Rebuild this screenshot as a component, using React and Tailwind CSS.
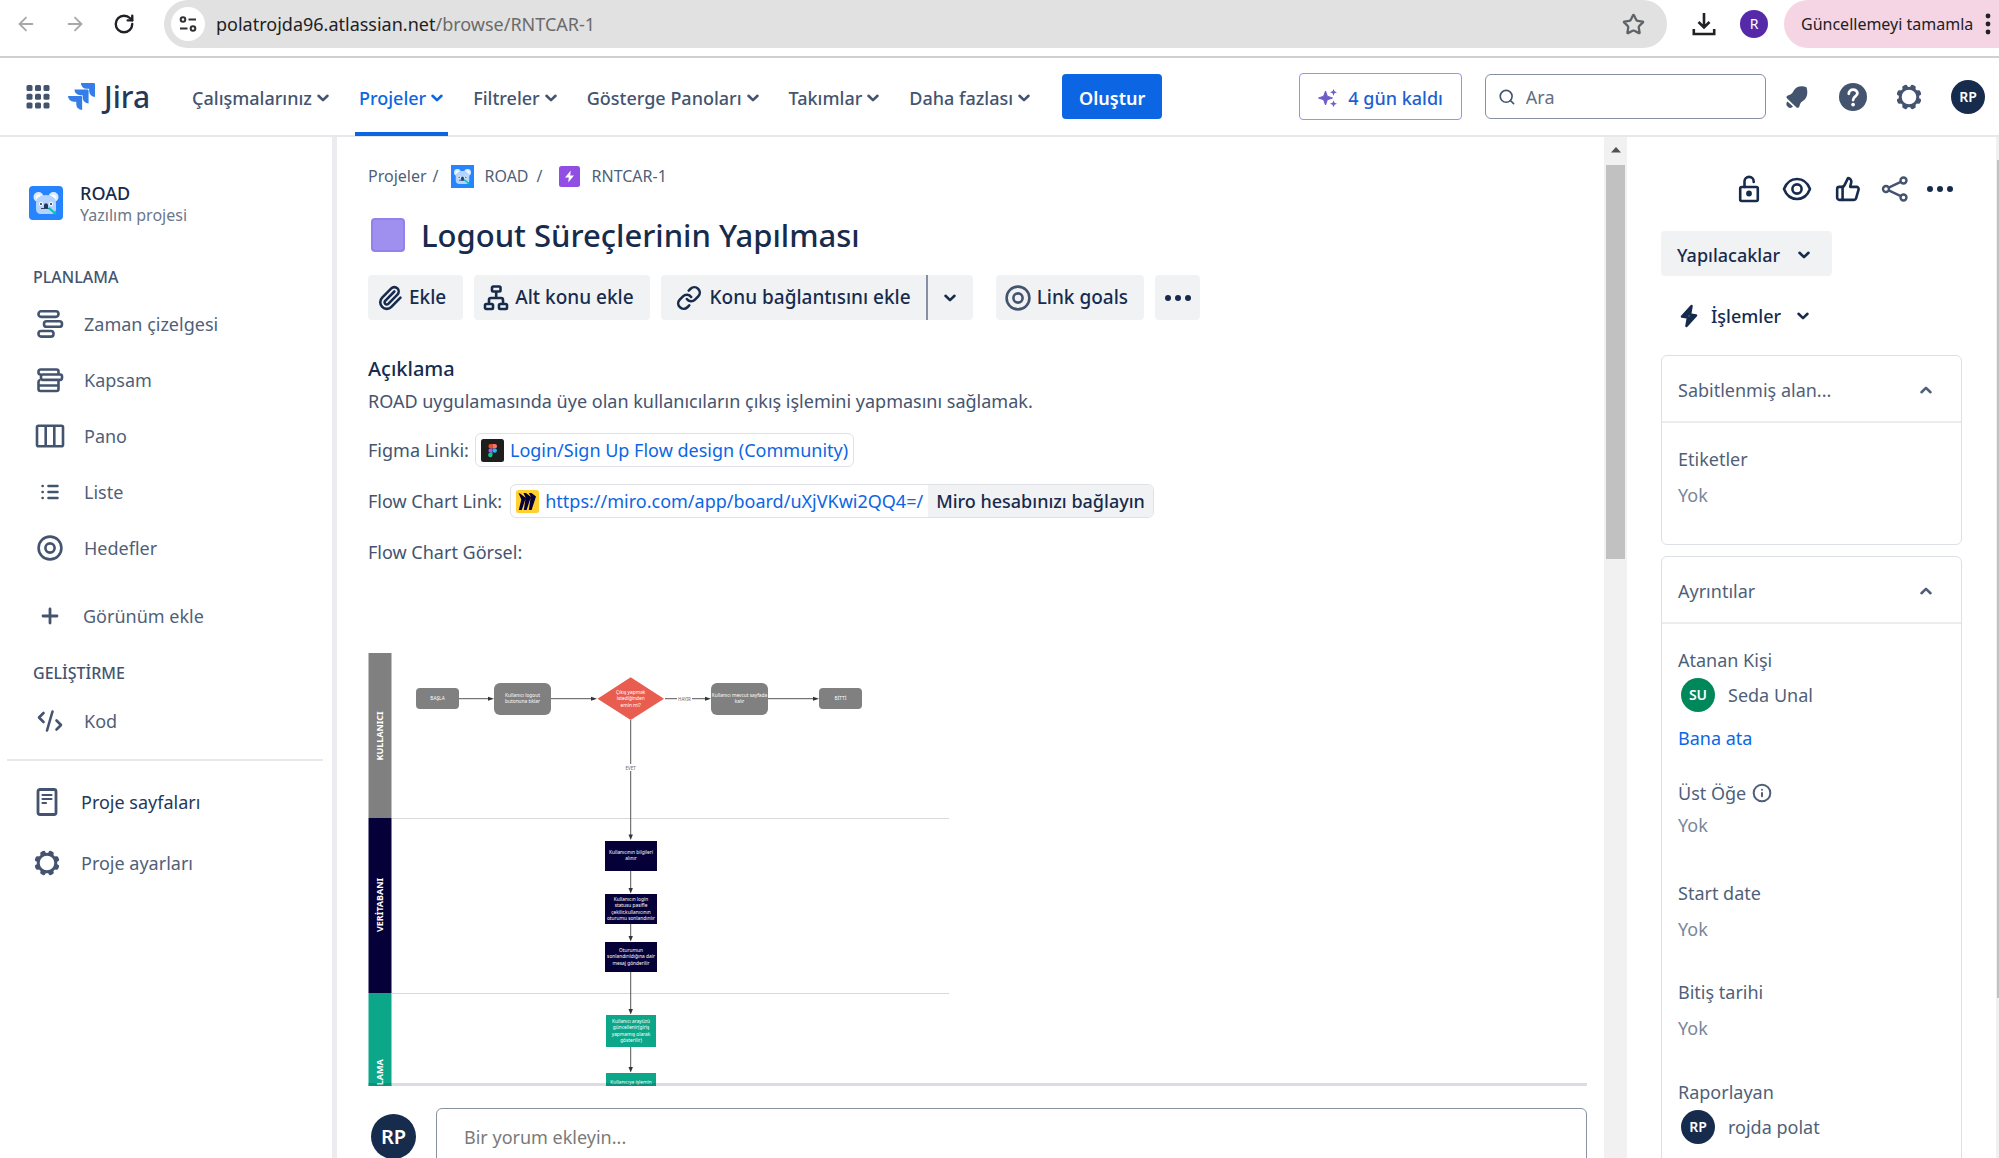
import React from "react";
import { ArrowLeft, ArrowRight, RotateCw, Star, Paperclip, Link, Plus, Info, Search, ThumbsUp } from "lucide-react";

const Chevron = ({ up, className = "" }) => (
  <svg viewBox="0 0 14 10" className={`h-[10px] w-[14px] shrink-0 fill-none stroke-current ${className}`}>
    <path d={up ? "M2.5 7.2 7 2.9l4.500 4.300" : "M2.500 2.800 7 7.100l4.500-4.300"} strokeWidth="2.600" strokeLinecap="round" strokeLinejoin="round" />
  </svg>
);

const Koala = ({ className }) => (
  <svg viewBox="0 0 34 34" className={className}>
    <rect width="34" height="34" fill="#2684ff" />
    <circle cx="9.500" cy="11" r="5" fill="#deebff" />
    <circle cx="24.500" cy="11" r="5" fill="#deebff" />
    <circle cx="9.700" cy="11.200" r="2.600" fill="#fff" />
    <circle cx="24.300" cy="11.200" r="2.600" fill="#fff" />
    <path d="M7 17c0-5 4-8 10-8s10 3 10 8v6c0 3-2 5-5 5H12c-3 0-5-2-5-5z" fill="#b3d4ff" />
    <circle cx="12" cy="18" r="2" fill="#fff" />
    <circle cx="22" cy="18" r="2" fill="#fff" />
    <circle cx="12" cy="18" r="1.100" fill="#253858" />
    <circle cx="22" cy="18" r="1.100" fill="#253858" />
    <path d="M15 19.500c0-3 4-3 4 0V23h-4z" fill="#253858" />
    <path d="M12 22.500h9" stroke="#344563" strokeWidth="1.200" />
    <path d="m20.500 22.500 6 5" stroke="#00c7b1" strokeWidth="2.200" strokeLinecap="round" />
  </svg>
);

const Gear = ({ className }) => (
  <svg viewBox="0 0 26 26" className={className}>
    <g fill="currentColor">
      {[22.5, 67.5, 112.5, 157.5, 202.5, 247.5, 292.5, 337.5].map((a) => (
        <rect key={a} x="10.200" y="0.400" width="5.600" height="6" rx="2" transform={`rotate(${a} 13 13)`} />
      ))}
    </g>
    <circle cx="13" cy="13" r="8.800" fill="#fff" stroke="currentColor" strokeWidth="3" />
  </svg>
);

const Target = ({ className }) => (
  <svg viewBox="0 0 26 26" className={className} fill="none" stroke="currentColor" strokeWidth="2.600">
    <circle cx="13" cy="13" r="11.400" />
    <circle cx="13" cy="13" r="4.600" />
  </svg>
);

const Dots = ({ className }) => (
  <svg viewBox="0 0 28 8" className={className} fill="currentColor">
    <circle cx="4" cy="4" r="3" />
    <circle cx="14" cy="4" r="3" />
    <circle cx="24" cy="4" r="3" />
  </svg>
);

const Timeline = () => (
  <svg viewBox="0 0 28 30" className="h-[30px] w-7" fill="none" stroke="currentColor" strokeWidth="2.600">
    <rect x="2.500" y="2.300" width="20" height="5.600" rx="2.600" />
    <rect x="8" y="12.200" width="18" height="5.600" rx="2.600" />
    <rect x="2.500" y="22" width="15" height="5.600" rx="2.600" />
  </svg>
);

const Backlog = () => (
  <svg viewBox="0 0 28 28" className="h-7 w-7" fill="none" stroke="currentColor" strokeWidth="2.600">
    <path d="M5 8.500H4.500a2 2 0 0 1-2-2v-1a2 2 0 0 1 2-2h16a2 2 0 0 1 2 2V8" />
    <rect x="5" y="8.500" width="21" height="5.400" rx="1.800" />
    <path d="M22.500 14v9a2 2 0 0 1-2 2h-16a2 2 0 0 1-2-2v-7a2 2 0 0 1 2-2M2.500 19.500h20" />
  </svg>
);

const Board = () => (
  <svg viewBox="0 0 30 24" className="h-6 w-[30px]" fill="none" stroke="currentColor" strokeWidth="2.600">
    <rect x="2" y="1.800" width="26" height="20.400" rx="1.500" />
    <path d="M10.700 2v20M19.300 2v20" />
  </svg>
);

const ListIcon = () => (
  <svg viewBox="0 0 18 16" className="h-4 w-[18px]" fill="none" stroke="currentColor" strokeWidth="2.600" strokeLinecap="round">
    <path d="M1.600 2h.1M1.600 8h.1M1.600 14h.1M7.500 2h9M7.500 8h9M7.500 14h9" />
  </svg>
);

const Code = () => (
  <svg viewBox="0 0 26 24" className="h-6 w-[26px]" fill="none" stroke="currentColor" strokeWidth="2.600" strokeLinecap="round" strokeLinejoin="round">
    <path d="M6.500 4 2 8.500 6.500 13M19.500 11.500 24 16l-4.500 4.500M15.500 2.500l-5.500 19" />
  </svg>
);

const PageIcon = () => (
  <svg viewBox="0 0 22 30" className="h-[30px] w-[22px]" fill="none" stroke="currentColor" strokeWidth="2.800" strokeLinecap="round">
    <rect x="2" y="2.500" width="18" height="25" rx="2" />
    <path d="M6.500 8h9M6.500 12h9M6.500 16h3.500" strokeWidth="2.200" />
  </svg>
);

const Subtask = () => (
  <svg viewBox="0 0 26 28" className="h-7 w-[26px]" fill="none" stroke="currentColor" strokeWidth="2.600">
    <rect x="9" y="2.500" width="8.500" height="5" rx="1.200" />
    <rect x="2" y="20" width="8" height="5" rx="1.200" />
    <rect x="16" y="20" width="8" height="5" rx="1.200" />
    <path d="M13.200 8v6M6 20v-4a2 2 0 0 1 2-2h10a2 2 0 0 1 2 2v4" />
  </svg>
);

const Epic = () => (
  <svg viewBox="0 0 21 21" className="h-[21px] w-[21px]">
    <rect width="21" height="21" rx="2.500" fill="#904ee2" />
    <path d="M11.800 4.500 6 11.500h3.800L9.200 16.500l5.800-7h-3.800z" fill="#fff" />
  </svg>
);

const Unlock = () => (
  <svg viewBox="0 0 22 28" className="h-7 w-[22px]" fill="none" stroke="currentColor" strokeWidth="2.600" strokeLinecap="round">
    <rect x="2.200" y="12" width="17.600" height="14" rx="1.500" />
    <path d="M6.500 12V6.500a4.600 4.600 0 0 1 9.200 0V7" />
    <circle cx="11" cy="18.500" r="1.600" fill="currentColor" />
  </svg>
);

const Eye = () => (
  <svg viewBox="0 0 30 24" className="h-6 w-[30px]" fill="none" stroke="currentColor" strokeWidth="2.600">
    <path d="M2 12C4.500 5.500 9 2 15 2s10.500 3.500 13 10c-2.500 6.500-7 10-13 10S4.500 18.500 2 12z" strokeLinejoin="round" />
    <circle cx="15" cy="12" r="4.600" />
  </svg>
);

const Share = () => (
  <svg viewBox="0 0 28 28" className="h-7 w-7 text-[#44546f]" fill="none" stroke="currentColor" strokeWidth="2.400">
    <circle cx="5" cy="14" r="3" />
    <circle cx="22.500" cy="5.500" r="3" />
    <circle cx="22.500" cy="22.500" r="3" />
    <path d="M7.700 12.700 19.800 6.900M7.700 15.300l12.100 5.800" />
  </svg>
);

const Sparkle = () => (
  <svg viewBox="0 0 20 20" className="h-5 w-5" fill="#6e5dc6">
    <path d="M7.500 3 9.300 8.200 14.500 10 9.300 11.800 7.500 17 5.700 11.800.5 10l5.200-1.800z" stroke="#6e5dc6" strokeLinejoin="round" />
    <path d="m15.500 1 1 2.300 2.500 1-2.500 1-1 2.400-1-2.400-2.500-1 2.500-1zM15.500 12.500l1 2.300 2.500 1-2.500 1-1 2.400-1-2.400-2.500-1 2.500-1z" />
  </svg>
);

const Bell = () => (
  <svg viewBox="0 0 26 26" className="h-[26px] w-[26px]" fill="currentColor">
    <path d="M22.500 3.200c-5.500-2-10.500-.5-12.700 3.400C8.500 9 7.500 10.600 4.500 11.200c-2 .4-2.600 2-1.400 3.200l9.200 8.900c1.200 1.100 2.800.5 3.200-1.400.6-3 2-3.800 4-5.300 3.600-2.700 4.800-7.500 3-13.400z" />
    <path d="M3.500 17.500a3.700 3.700 0 0 0 5.500 5z" />
  </svg>
);

const Bolt = () => (
  <svg viewBox="0 0 18 24" className="h-6 w-[18px]">
    <path d="M11.500 2 2 12.500l6 1L6.500 22 16 11.500l-6-1z" fill="none" stroke="currentColor" strokeWidth="2.600" strokeLinejoin="round" />
    <path d="M11.500 2 2 12.500l7 .5z M16 11.500 6.500 22 9 11z" fill="currentColor" />
  </svg>
);

const FigmaLogo = () => (
  <svg viewBox="0 0 23 23" className="h-[23px] w-[23px]">
    <rect width="23" height="23" rx="2.500" fill="#1e1e1e" />
    <path d="M11.500 5H9.600a2.200 2.200 0 0 0 0 4.400h1.900z" fill="#f24e1e" />
    <path d="M11.500 5h2.300a2.200 2.200 0 0 1 0 4.400h-2.300z" fill="#ff7262" />
    <path d="M11.500 9.400H9.600a2.200 2.200 0 0 0 0 4.400h1.900z" fill="#a259ff" />
    <circle cx="13.800" cy="11.600" r="2.200" fill="#1abcfe" />
    <path d="M11.500 13.800H9.600a2.200 2.200 0 1 0 1.900 2.200z" fill="#0acf83" />
  </svg>
);

const MiroLogo = () => (
  <svg viewBox="0 0 23 23" className="h-[23px] w-[23px]">
    <rect width="23" height="23" rx="2.500" fill="#ffd02f" />
    <path d="M15.500 3h-2.700l2.200 4-5-4H7.400l2.400 5L4.500 3.800 2.500 3l2.800 6.500L2.800 20h3L9.500 8.800 7.800 20h2.800l4-12.200L12.800 20h2.800L20 6.500z" fill="#050038" />
  </svg>
);

const Avatar = ({ children, className }) => (
  <span className={`flex shrink-0 items-center justify-center rounded-full font-semibold text-white ${className}`}>{children}</span>
);

function BrowserBar() {
  return (
    <div className="flex h-[58px] shrink-0 items-start border-b-2 border-[#d0d0d0] text-lg">
      <div className="flex h-12 w-[164px] items-center gap-[27px] pl-[15px]">
        <button aria-label="Geri" className="text-[#a8a8a8]"><ArrowLeft size={22} strokeWidth={2} /></button>
        <button aria-label="İleri" className="text-[#a8a8a8]"><ArrowRight size={22} strokeWidth={2} /></button>
        <button aria-label="Yenile" className="text-[#202124]"><RotateCw size={22} strokeWidth={2.600} /></button>
      </div>
      <div className="flex h-12 flex-1 items-center rounded-full bg-[#e1e1e1] pr-[22px] pl-[7px]">
        <span className="flex h-[34px] w-[34px] items-center justify-center rounded-full bg-white">
          <svg viewBox="0 0 18 16" className="h-4 w-[18px]" fill="none" stroke="#303134" strokeWidth="2">
            <circle cx="4" cy="3.500" r="2.300" />
            <path d="M9.500 3.500H17M1 12.500h7.500" />
            <circle cx="14" cy="12.500" r="2.300" />
          </svg>
        </span>
        <span className="ml-[11px] text-[#202124]">polatrojda96.atlassian.net<span className="text-[#6b6b6b]">/browse/RNTCAR-1</span></span>
        <button aria-label="Yer işareti ekle" className="ml-auto text-[#5f6368]"><Star size={23} strokeWidth={2.400} /></button>
      </div>
      <div className="flex h-12 items-center pl-[25px]">
        <button aria-label="İndirilenler">
          <svg viewBox="0 0 24 24" className="h-6 w-6" fill="none" stroke="#202124" strokeWidth="2.600">
            <path d="M12 1v14M6.500 10l5.500 5.500 5.500-5.500M1.800 17v5h20.400v-5" />
          </svg>
        </button>
        <span className="ml-6 flex h-7 w-7 items-center justify-center rounded-full bg-[#5529a8] text-sm text-white">R</span>
        <button className="ml-4 flex h-12 w-[215px] items-center justify-between rounded-l-full bg-[#f5d5e3] pr-2 pl-[17px] text-base text-[#202124]">
          Güncellemeyi tamamla
          <svg viewBox="0 0 6 22" className="h-[22px] w-[6px]" fill="#202124">
            <circle cx="3" cy="3" r="2.400" /><circle cx="3" cy="11" r="2.400" /><circle cx="3" cy="19" r="2.400" />
          </svg>
        </button>
      </div>
    </div>
  );
}

const navItems = ["Çalışmalarınız", "Projeler", "Filtreler", "Gösterge Panoları", "Takımlar", "Daha fazlası"];

function TopNav() {
  return (
    <header className="flex h-[79px] shrink-0 items-center border-b-2 border-[#e6e8ec] pr-[14px] pl-[26px] text-[#44546f]">
      <button aria-label="Uygulama değiştirici">
        <svg viewBox="0 0 24 24" className="h-6 w-6" fill="currentColor">
          {[0, 8.7, 17.4].map((y) => [0.5, 9, 17.5].map((x) => <rect key={`${x}-${y}`} x={x} y={y} width="6" height="6" rx="1.500" />))}
        </svg>
      </button>
      <a href="#jira" className="ml-[18px] flex items-center gap-[9px]">
        <svg viewBox="0 0 24 24" className="h-[27px] w-[27px]" fill="#357de8">
          <path d="M11.571 11.513H0a5.218 5.218 0 0 0 5.232 5.215h2.130v2.057A5.215 5.215 0 0 0 12.575 24V12.518a1.005 1.005 0 0 0-1.005-1.005zm5.723-5.756H5.736a5.215 5.215 0 0 0 5.215 5.214h2.129v2.058a5.218 5.218 0 0 0 5.215 5.214V6.758a1.001 1.001 0 0 0-1.001-1.001zM23.013 0H11.455a5.215 5.215 0 0 0 5.215 5.215h2.129v2.057A5.215 5.215 0 0 0 24 12.483V1.005A1.001 1.001 0 0 0 23.013 0Z" />
        </svg>
        <span className="text-3xl leading-9 font-medium text-[#253858]">Jira</span>
      </a>
      <nav className="ml-[38px] flex h-[79px] items-stretch gap-[21px] text-lg font-medium">
        {navItems.map((label) => (
          <button
            key={label}
            className={label === "Projeler" ? "flex items-center gap-1 border-b-4 border-[#0c66e4] px-1 pt-1.5 whitespace-nowrap text-[#0c66e4]" : "flex items-center gap-1 px-1 pt-0.5 whitespace-nowrap"}
          >
            {label}
            <Chevron />
          </button>
        ))}
      </nav>
      <button className="ml-[27px] h-[45px] rounded bg-[#0c66e4] px-[17px] pt-0.5 text-lg font-semibold text-white">Oluştur</button>
      <button className="ml-auto flex h-[47px] items-center gap-2.5 rounded border border-[#9f8fef] px-[18px] pt-0.5 text-lg font-medium whitespace-nowrap text-[#1d5fd0]">
        <Sparkle />
        4 gün kaldı
      </button>
      <label className="ml-[23px] flex h-[45px] w-[281px] items-center gap-2.5 rounded-md border border-[#8590a2] px-3">
        <Search size={20} strokeWidth={2.200} />
        <input type="text" aria-label="Ara" placeholder="Ara" className="w-full min-w-0 text-lg outline-none placeholder:text-[#626f86]" />
      </label>
      <div className="ml-[18px] flex items-center gap-[29px]">
        <button aria-label="Bildirimler"><Bell /></button>
        <button aria-label="Yardım">
          <svg viewBox="0 0 28 28" className="h-7 w-7">
            <circle cx="14" cy="14" r="14" fill="currentColor" />
            <path d="M9.800 10.800c0-5.500 8.600-5.400 8.600-.5 0 3.300-4.300 3-4.300 6.700" fill="none" stroke="#fff" strokeWidth="2.800" strokeLinecap="round" />
            <circle cx="14.100" cy="21.600" r="1.900" fill="#fff" />
          </svg>
        </button>
        <button aria-label="Ayarlar"><Gear className="h-[26px] w-[26px]" /></button>
        <Avatar className="h-[34px] w-[34px] bg-[#172b4d] text-sm">RP</Avatar>
      </div>
    </header>
  );
}

const NavRow = ({ icon, children, className = "h-14 gap-[17px]" }) => (
  <a href="#gezinme" className={`flex items-center ${className}`}>
    <span className="flex w-[34px] shrink-0 justify-center text-[#44546f]">{icon}</span>
    {children}
  </a>
);

function Sidebar() {
  return (
    <aside className="w-[337px] shrink-0 border-r-[5px] border-[#ebecf0] text-lg text-[#505f79]">
      <div className="flex items-center gap-[17px] pt-11 pl-[29px]">
        <Koala className="h-[34px] w-[34px] rounded-sm" />
        <div>
          <div className="leading-6 font-medium text-[#172b4d]">ROAD</div>
          <div className="text-base leading-5 text-[#6b778c]">Yazılım projesi</div>
        </div>
      </div>
      <h2 className="mt-10 pl-[33px] text-base leading-6 font-medium text-[#44546f]">PLANLAMA</h2>
      <div className="mt-[7px] pl-[33px]">
        <NavRow icon={<Timeline />}>Zaman çizelgesi</NavRow>
        <NavRow icon={<Backlog />}>Kapsam</NavRow>
        <NavRow icon={<Board />}>Pano</NavRow>
        <NavRow icon={<ListIcon />}>Liste</NavRow>
        <NavRow icon={<Target className="h-[26px] w-[26px]" />}>Hedefler</NavRow>
        <NavRow className="mt-3 h-14 gap-4" icon={<Plus size={24} strokeWidth={2.800} />}>Görünüm ekle</NavRow>
      </div>
      <h2 className="mt-[17px] pl-[33px] text-base leading-6 font-medium text-[#44546f]">GELİŞTİRME</h2>
      <div className="mt-2 pl-[33px]">
        <NavRow icon={<Code />}>Kod</NavRow>
      </div>
      <hr className="mt-2.5 mr-[9px] ml-[7px] border-t-2 border-[#e6e8ec]" />
      <div className="mt-2.5 pl-[30px]">
        <NavRow className="h-[61px] gap-[17px] text-[#253858]" icon={<PageIcon />}>Proje sayfaları</NavRow>
        <NavRow className="h-[61px] gap-[17px]" icon={<Gear className="h-[26px] w-[26px]" />}>Proje ayarları</NavRow>
      </div>
    </aside>
  );
}

const Lines = ({ x, y, lines, fill = "#fff", size = 4.8 }) => (
  <text x={x} y={y} fill={fill} fontSize={size} textAnchor="middle">
    {lines.map((line, i) => <tspan key={line} x={x} dy={i === 0 ? 0 : 6.4}>{line}</tspan>)}
  </text>
);

const lanes = [
  { y: 0, h: 165, fill: "#808080", label: "KULLANICI", ly: 83 },
  { y: 165, h: 175, fill: "#050038", label: "VERİTABANI", ly: 252 },
  { y: 340, h: 175, fill: "#0ca789", label: "UYGULAMA", ly: 432 },
];

const boxes = [
  { x: 48, y: 35, w: 43, h: 21, r: 4, fill: "#808080", lines: ["BAŞLA"], ty: 47 },
  { x: 126, y: 30, w: 57, h: 32, r: 6, fill: "#808080", lines: ["Kullanıcı logout", "butonuna tıklar"], ty: 44 },
  { x: 343, y: 30, w: 57, h: 32, r: 6, fill: "#808080", lines: ["Kullanıcı mevcut sayfada", "kalır"], ty: 44 },
  { x: 451, y: 35, w: 43, h: 21, r: 4, fill: "#808080", lines: ["BİTTİ"], ty: 47 },
  { x: 237, y: 188, w: 52, h: 30, r: 0, fill: "#050038", lines: ["Kullanıcının bilgileri", "alınır"], ty: 201 },
  { x: 237, y: 241, w: 52, h: 30, r: 0, fill: "#050038", lines: ["Kullanıcın login", "statusu pasifle", "çekilir,kullanıcının", "oturumu sonlandırılır"], ty: 248 },
  { x: 237, y: 289, w: 52, h: 30, r: 0, fill: "#050038", lines: ["Oturumun", "sonlandırıldığına dair", "mesaj gönderilir"], ty: 299 },
  { x: 238, y: 362, w: 50, h: 32, r: 0, fill: "#0ca789", lines: ["Kullanıcı arayüzü", "güncellenir(giriş", "yapmamış olarak", "gösterilir)"], ty: 370 },
  { x: 238, y: 420, w: 50, h: 32, r: 0, fill: "#0ca789", lines: ["Kullanıcıya işlemin"], ty: 431 },
];

function FlowChart() {
  return (
    <svg viewBox="0 0 582 515" className="h-[515px] w-[582px] max-w-none" role="img" aria-label="Logout akış şeması">
      {lanes.map((l) => (
        <g key={l.label}>
          <rect x="0.500" y={l.y} width="23" height={l.h} fill={l.fill} />
          <text transform={`translate(15.200 ${l.ly}) rotate(-90)`} textAnchor="middle" fontSize="9" fontWeight="700" fill="#fff">{l.label}</text>
        </g>
      ))}
      <path d="M24 165.500H581M24 340.500H581" stroke="#d9d9d9" strokeWidth="1.200" />
      <g stroke="#555" strokeWidth="1">
        <path d="M91 45.700H122M183 45.700H226M297 45.700H338M400 45.700H447M262.700 67V184M262.700 218V237M262.700 271V285M262.700 319V358M262.700 394V416" />
      </g>
      <g fill="#333">
        {[126, 229, 343, 451].map((x) => <path key={x} d={`M${x} 45.700l-6-2v4z`} />)}
        {[187, 240.500, 288.500, 361.500, 419.500].map((y) => <path key={y} d={`M262.700 ${y}l-2.200-5.500h4.400z`} />)}
      </g>
      <path d="M262.700 24.300 296 45.700 262.700 67 229.500 45.700z" fill="#e85d50" />
      <Lines x={262.7} y={41} lines={["Çıkış yapmak", "istediğinden", "emin mi?"]} />
      <rect x="309" y="42" width="15" height="7" fill="#fff" />
      <Lines x={316.5} y={47.5} lines={["HAYIR"]} fill="#666" size={4.5} />
      <rect x="257" y="111" width="12" height="7" fill="#fff" />
      <Lines x={262.7} y={116.5} lines={["EVET"]} fill="#666" size={4.5} />
      {boxes.map((b) => (
        <g key={`${b.x}-${b.y}`}>
          <rect x={b.x} y={b.y} width={b.w} height={b.h} rx={b.r} fill={b.fill} />
          <Lines x={b.x + b.w / 2} y={b.ty} lines={b.lines} />
        </g>
      ))}
    </svg>
  );
}

const grayButton = "flex h-[45px] items-center bg-[#f1f2f4] font-medium whitespace-nowrap text-[#172b4d]";

function Issue() {
  return (
    <main className="flex min-w-0 flex-1 flex-col pr-[17px] pl-[31px] text-lg text-[#44546f]">
      <div className="relative min-h-0 flex-1 overflow-hidden">
        <nav aria-label="İçerik haritası" className="mt-[27px] flex h-6 items-center text-base text-[#505f79]">
          <a href="#projeler">Projeler</a>
          <span className="ml-1.5">/</span>
          <Koala className="ml-3 h-[23px] w-[23px]" />
          <a href="#road" className="ml-[11px]">ROAD</a>
          <span className="ml-2">/</span>
          <span className="ml-4"><Epic /></span>
          <a href="#rntcar-1" className="ml-3">RNTCAR-1</a>
        </nav>
        <div className="mt-[23px] flex h-12 items-center gap-4 pl-[3px]">
          <span className="h-[34px] w-[34px] rounded border-2 border-[#8f7ee7]/80 bg-[#9f8fef]" />
          <h1 className="text-[31px] font-medium text-[#172b4d]">Logout Süreçlerinin Yapılması</h1>
        </div>
        <div className="mt-4 flex text-[19px]">
          <button className={`${grayButton} gap-1.5 rounded pr-[17px] pl-[9px]`}><Paperclip size={26} strokeWidth={2.400} />Ekle</button>
          <button className={`${grayButton} ml-[11px] gap-1.5 rounded pr-4 pl-[9px]`}><Subtask />Alt konu ekle</button>
          <button className={`${grayButton} ml-[11px] gap-2 rounded-l border-r-2 border-[#8590a2] pr-[15px] pl-[15px]`}><Link size={26} strokeWidth={2.400} />Konu bağlantısını ekle</button>
          <button aria-label="Bağlantı seçenekleri" className={`${grayButton} w-[45px] justify-center rounded-r`}><Chevron /></button>
          <button className={`${grayButton} ml-[23px] gap-1.5 rounded pr-4 pl-[9px]`}><Target className="h-[26px] w-[26px] text-[#44546f]" />Link goals</button>
          <button aria-label="Diğer işlemler" className={`${grayButton} ml-[11px] w-[45px] justify-center rounded`}><Dots className="h-2 w-7" /></button>
        </div>
        <h2 className="mt-[35px] text-xl leading-7 font-medium text-[#172b4d]">Açıklama</h2>
        <p className="mt-1 leading-7">ROAD uygulamasında üye olan kullanıcıların çıkış işlemini yapmasını sağlamak.</p>
        <div className="mt-[18px] flex h-[34px] items-center gap-1.5 whitespace-nowrap">
          Figma Linki:
          <a href="#figma" className="flex h-[34px] items-center gap-1.5 rounded-md border border-[#dfe1e6] px-[5px] text-[#0c66e4]"><FigmaLogo />Login/Sign Up Flow design (Community)</a>
        </div>
        <div className="mt-[17px] flex h-[34px] items-center gap-2 whitespace-nowrap">
          Flow Chart Link:
          <span className="flex h-[34px] items-stretch overflow-hidden rounded-md border border-[#dfe1e6]">
            <a href="#miro" className="flex items-center gap-1.5 px-[5px] text-[#0c66e4]"><MiroLogo />https://miro.com/app/board/uXjVKwi2QQ4=/</a>
            <button className="bg-[#f1f2f4] px-2 font-medium text-[#172b4d]">Miro hesabınızı bağlayın</button>
          </span>
        </div>
        <p className="mt-[17px] leading-[34px]">Flow Chart Görsel:</p>
        <div className="mt-[84px]"><FlowChart /></div>
        <div className="absolute inset-x-0 bottom-0 h-[3px] bg-[#091e42]/15" />
      </div>
      <div className="flex h-[72px] shrink-0 items-start overflow-hidden pt-[22px] pl-[3px]">
        <Avatar className="mt-1.5 h-[45px] w-[45px] bg-[#172b4d] text-xl">RP</Avatar>
        <input type="text" aria-label="Yorum" placeholder="Bir yorum ekleyin..." className="ml-5 h-[58px] min-w-0 flex-1 rounded-md border border-[#8993a4] px-[27px] text-lg outline-none placeholder:text-[#7a7a7a]" />
      </div>
    </main>
  );
}

const Card = ({ title, children, className }) => (
  <section className={`w-[301px] rounded-md border border-[#dcdfe4] ${className}`}>
    <button className="flex h-[67px] w-full items-center justify-between border-b-2 border-[#ebecf0] pt-0.5 pr-7 pl-4 text-[#505f79]">
      {title}
      <Chevron up />
    </button>
    <div className="px-4">{children}</div>
  </section>
);

const Field = ({ label, value, className, tight }) => (
  <div className={className}>
    <div className="flex h-7 items-center gap-1.5">{label}</div>
    <div className={tight ? "mt-1 h-7 leading-7 text-[#7a869a]" : "mt-2 h-7 leading-7 text-[#7a869a]"}>{value}</div>
  </div>
);

const Person = ({ initials, color, name }) => (
  <div className="flex h-[34px] items-center gap-[13px] pl-[3px]">
    <Avatar className={`h-[34px] w-[34px] text-sm ${color}`}>{initials}</Avatar>
    {name}
  </div>
);

function Details() {
  return (
    <aside className="flex w-[372px] shrink-0 overflow-hidden text-lg text-[#505f79]">
      <div className="flex-1 pl-[34px]">
        <div className="mt-9 flex h-8 items-center justify-end pr-[42px] text-[#172b4d]">
          <button aria-label="Kısıtlamalar"><Unlock /></button>
          <button aria-label="İzle" className="ml-[22px]"><Eye /></button>
          <button aria-label="Beğen" className="ml-[23px]"><ThumbsUp size={26} strokeWidth={2.400} /></button>
          <button aria-label="Paylaş" className="ml-5"><Share /></button>
          <button aria-label="Diğer" className="ml-[17px]"><Dots className="h-2 w-7" /></button>
        </div>
        <button className={`${grayButton} mt-[26px] w-[171px] justify-between rounded pt-0.5 pr-[21px] pl-4`}>Yapılacaklar<Chevron /></button>
        <button className="mt-[22px] flex h-9 items-center pl-[19px] font-medium text-[#172b4d]"><Bolt /><span className="ml-[13px]">İşlemler</span><Chevron className="ml-[15px]" /></button>
        <Card title="Sabitlenmiş alan..." className="mt-[21px] h-[190px]">
          <Field label="Etiketler" value="Yok" className="mt-[22px]" />
        </Card>
        <Card title="Ayrıntılar" className="mt-[11px] h-[700px]">
          <div className="mt-[22px] leading-7">Atanan Kişi</div>
          <div className="mt-1"><Person initials="SU" color="bg-[#00875a]" name="Seda Unal" /></div>
          <a href="#bana-ata" className="mt-3 block leading-7 text-[#0c66e4]">Bana ata</a>
          <Field label={<>Üst Öğe <Info size={20} strokeWidth={2.400} /></>} value="Yok" tight className="mt-[27px]" />
          <Field label="Start date" value="Yok" className="mt-10" />
          <Field label="Bitiş tarihi" value="Yok" className="mt-[35px]" />
          <div className="mt-9 leading-7">Raporlayan</div>
          <div className="mt-1"><Person initials="RP" color="bg-[#172b4d]" name="rojda polat" /></div>
        </Card>
      </div>
      <div className="w-[3px] shrink-0 bg-[#f1f1f1] pt-[23px] pl-px"><div className="h-[84%] bg-[#c1c1c1]" /></div>
    </aside>
  );
}

export default function App() {
  return (
    <div className="flex h-screen flex-col overflow-hidden bg-white font-['Noto_Sans','Open_Sans',sans-serif]">
      <BrowserBar />
      <TopNav />
      <div className="flex min-h-0 flex-1">
        <Sidebar />
        <Issue />
        <div className="flex w-[23px] shrink-0 flex-col items-center bg-[#f1f1f1]">
          <svg viewBox="0 0 12 28" className="h-7 w-3"><path d="M1 15.500 6 10l5 5.500z" fill="#505050" /></svg>
          <div className="h-[394px] w-[19px] bg-[#c1c1c1]" />
        </div>
        <Details />
      </div>
    </div>
  );
}
